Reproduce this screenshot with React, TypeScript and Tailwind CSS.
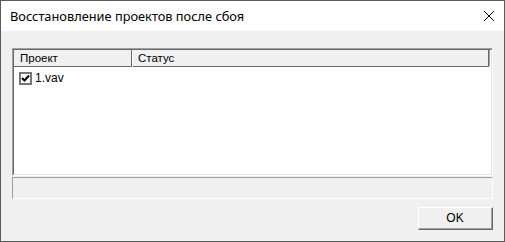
import React from "react";

export default function App() {
  return (
    <div className="w-[505px] h-[242px] border border-[#5b5b5b] bg-[#f0f0f0] flex flex-col" style={{ fontFamily: '"Liberation Sans", Arial, sans-serif' }}>
      <div className="h-[30px] bg-white flex items-center justify-between pl-[9px] pr-[8px] shrink-0">
        <span className="text-[12.8px] text-black mt-[1px]" style={{ fontFamily: '"Noto Sans", "Open Sans", sans-serif' }}>Восстановление проектов после сбоя</span>
        <svg width="12" height="12" viewBox="0 0 12 12" className="mr-[1px]">
          <path d="M1 1 L11 11 M11 1 L1 11" stroke="#000" strokeWidth="1" fill="none" />
        </svg>
      </div>
      <div className="flex flex-col pl-[11px] pr-[11px] pt-[17px]">
        <div className="h-[128px] w-[481px] border-t border-l border-[#a0a0a0] border-r border-r-white border-b border-b-white">
          <div className="h-full w-full border-t border-l border-[#696969] border-r border-r-[#e3e3e3] border-b border-b-[#e3e3e3] bg-white flex flex-col">
            <div className="h-[17px] flex text-[11.5px] text-black">
              <div className="w-[118px] border-r border-[#696969] border-b bg-[#f0f0f0] pl-[6px] leading-[16px] relative">
                <span>Проект</span>
              </div>
              <div className="w-px bg-white h-[16px]"></div>
              <div className="w-[356px] border-r border-[#696969] border-b border-b-[#696969] bg-[#f0f0f0] pl-[5px] leading-[16px]">Статус</div>
              <div className="w-px bg-[#a0a0a0] h-[16px]"></div>
            </div>
            <div className="flex items-center pl-[5px] pt-[2px] h-[16px] mt-[2px]">
              <div className="w-[13px] h-[13px] border-2 border-[#767676] bg-white flex items-center justify-center">
                <svg width="9" height="9" viewBox="0 0 9 9">
                  <path d="M1 4 L3.5 6.5 L8 1.5" stroke="#000" strokeWidth="2" fill="none" />
                </svg>
              </div>
              <span className="ml-[3px] text-[12px] text-black leading-[14px]">1.vav</span>
            </div>
          </div>
        </div>
        <div className="mt-[1px] h-[22px] w-[481px] border-t border-l border-[#a0a0a0] border-r border-r-white border-b border-b-white bg-[#f0f0f0]"></div>
        <div className="flex justify-end mt-[8px] pr-[0px]">
          <button className="w-[75px] h-[23px] border-t border-l border-white border-r border-b border-r-[#696969] border-b-[#696969] bg-[#f0f0f0] p-0">
            <div className="w-full h-full border-r border-b border-[#a0a0a0] text-[12px] text-black flex items-center justify-center">OK</div>
          </button>
        </div>
      </div>
    </div>
  );
}
